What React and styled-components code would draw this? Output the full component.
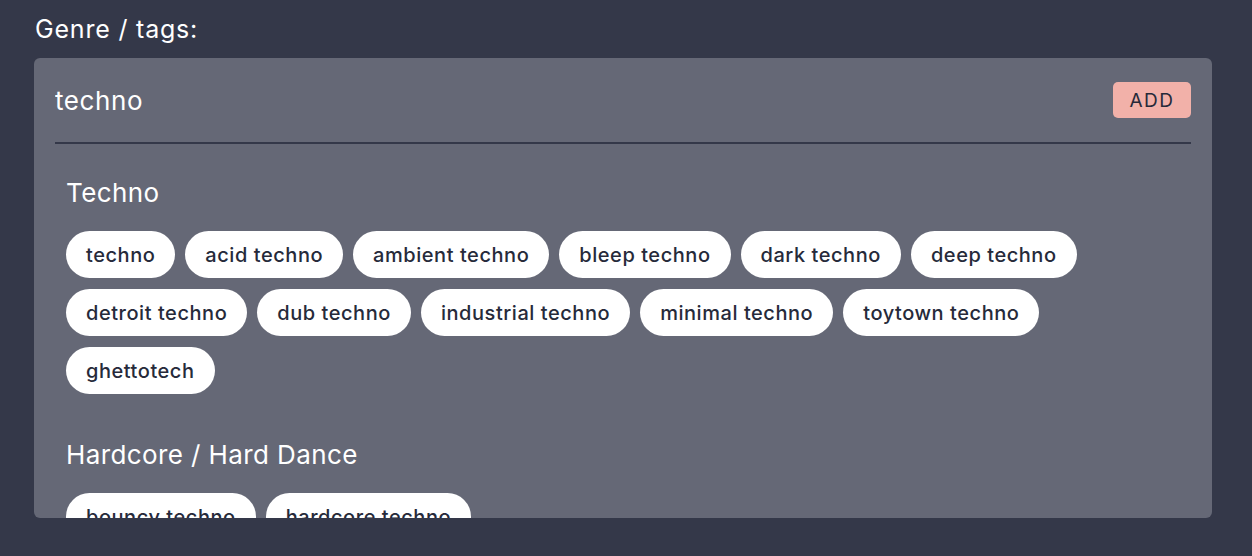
import React, { useState } from 'react';
import styled, { createGlobalStyle } from 'styled-components';

const sections = [
  {
    title: 'Techno',
    tags: [
      'techno', 'acid techno', 'ambient techno', 'bleep techno', 'dark techno', 'deep techno',
      'detroit techno', 'dub techno', 'industrial techno', 'minimal techno', 'toytown techno',
      'ghettotech',
    ],
  },
  {
    title: 'Hardcore / Hard Dance',
    tags: ['bouncy techno', 'hardcore techno'],
  },
];

function App() {
  const [query, setQuery] = useState('techno');

  return (
    <>
      <GlobalStyle />
      <Page>
        <Label>Genre / tags:</Label>
        <Panel>
          <InputRow>
            <SearchInput value={query} onChange={(e) => setQuery(e.target.value)} />
            <AddButton>ADD</AddButton>
          </InputRow>
          <Divider />
          {sections.map((s) => (
            <Section key={s.title}>
              <SectionTitle>{s.title}</SectionTitle>
              <ChipList>
                {s.tags.map((t) => (
                  <Chip key={t}>{t}</Chip>
                ))}
              </ChipList>
            </Section>
          ))}
        </Panel>
      </Page>
    </>
  );
}

export default App;

const GlobalStyle = createGlobalStyle`
  body {
    margin : 0;
    background : #343849;
    font-family : Inter, "Noto Sans", sans-serif;
  }
`

const Page = styled.div`
  padding : 14px 40px 0 34px;
  height : 556px;
  box-sizing : border-box;
`

const Label = styled.div`
  color : #FFFFFF;
  font-size : 25px;
  letter-spacing : 0.8px;
  line-height : 30px;
  padding-left : 1px;
`

const Panel = styled.div`
  margin-top : 14px;
  width : 1178px;
  height : 460px;
  box-sizing : border-box;
  padding : 24px 21px 0 21px;
  background : #656876;
  border-radius : 6px;
  overflow : hidden;
`

const InputRow = styled.div`
  display : flex;
  align-items : center;
  height : 36px;
`

const SearchInput = styled.input`
  flex : 1;
  background : transparent;
  border : none;
  outline : none;
  padding : 0;
  color : #FFFFFF;
  font-family : inherit;
  font-size : 26px;
  letter-spacing : 0.6px;
`

const AddButton = styled.button`
  height : 36px;
  width : 78px;
  border : none;
  border-radius : 5px;
  background : #F2B1A9;
  color : #262A3A;
  font-family : inherit;
  font-size : 19px;
  letter-spacing : 1.5px;
`

const Divider = styled.div`
  margin-top : 24px;
  height : 2px;
  background : #343849;
`

const Section = styled.div`
  padding : 34px 11px 12px;
`

const SectionTitle = styled.div`
  color : #FFFFFF;
  font-size : 26px;
  letter-spacing : 0.4px;
  line-height : 30px;
  margin-bottom : 23px;
`

const ChipList = styled.div`
  display : flex;
  flex-wrap : wrap;
  gap : 11px 10px;
`

const Chip = styled.div`
  height : 47px;
  display : flex;
  align-items : center;
  padding : 0 20px;
  border-radius : 24px;
  background : #FFFFFF;
  color : #262A3A;
  font-size : 20px;
  letter-spacing : 0.55px;
  font-weight : 500;
`
